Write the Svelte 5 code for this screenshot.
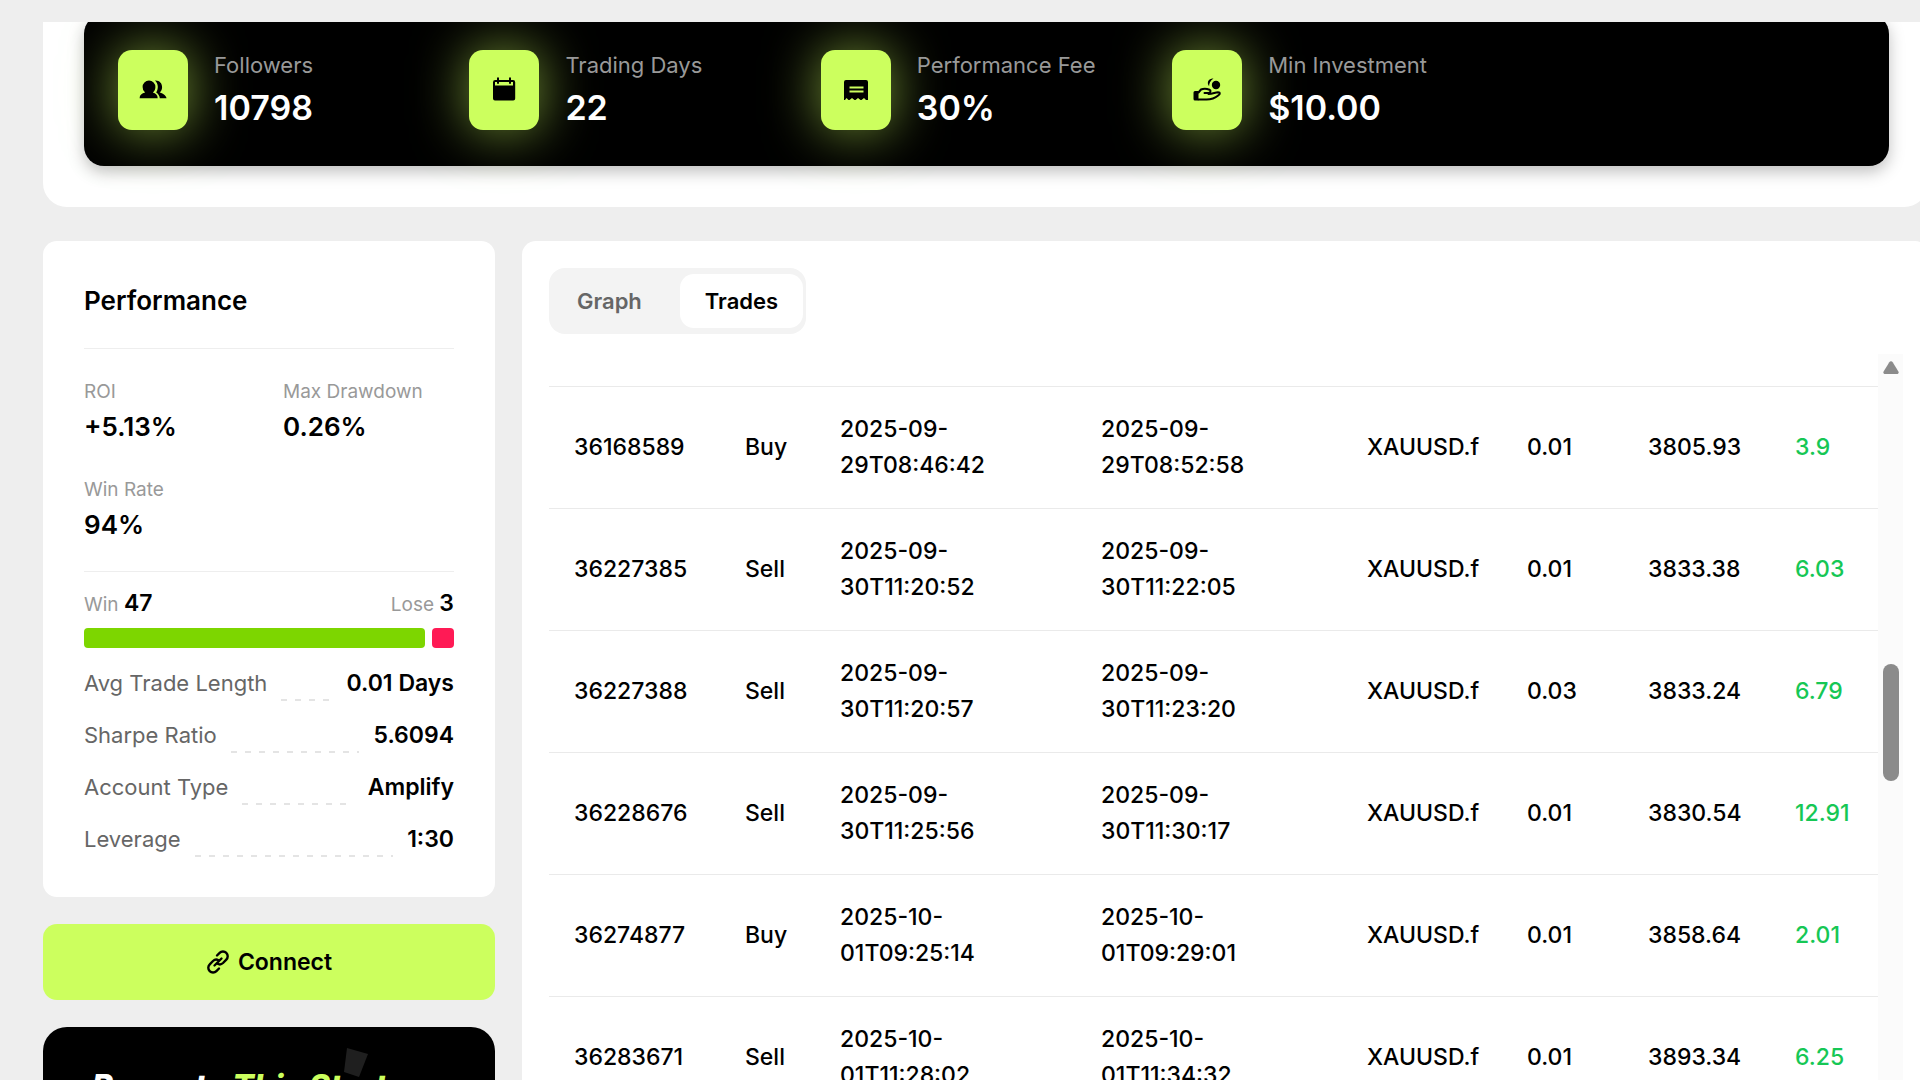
<script>
  const stats = [
    { icon: 'users', label: 'Followers', value: '10798' },
    { icon: 'calendar', label: 'Trading Days', value: '22' },
    { icon: 'receipt', label: 'Performance Fee', value: '30%' },
    { icon: 'hand', label: 'Min Investment', value: '$10.00' }
  ];
  const metrics = [
    { label: 'ROI', value: '+5.13%' },
    { label: 'Max Drawdown', value: '0.26%' },
    { label: 'Win Rate', value: '94%' }
  ];
  const details = [
    { label: 'Avg Trade Length', value: '0.01 Days' },
    { label: 'Sharpe Ratio', value: '5.6094' },
    { label: 'Account Type', value: 'Amplify' },
    { label: 'Leverage', value: '1:30' }
  ];
  const win = 47;
  const lose = 3;
  const trades = [
    ['36168589', 'Buy', '2025-09-29T08:46:42', '2025-09-29T08:52:58', 'XAUUSD.f', '0.01', '3805.93', '3.9'],
    ['36227385', 'Sell', '2025-09-30T11:20:52', '2025-09-30T11:22:05', 'XAUUSD.f', '0.01', '3833.38', '6.03'],
    ['36227388', 'Sell', '2025-09-30T11:20:57', '2025-09-30T11:23:20', 'XAUUSD.f', '0.03', '3833.24', '6.79'],
    ['36228676', 'Sell', '2025-09-30T11:25:56', '2025-09-30T11:30:17', 'XAUUSD.f', '0.01', '3830.54', '12.91'],
    ['36274877', 'Buy', '2025-10-01T09:25:14', '2025-10-01T09:29:01', 'XAUUSD.f', '0.01', '3858.64', '2.01'],
    ['36283671', 'Sell', '2025-10-01T11:28:02', '2025-10-01T11:34:32', 'XAUUSD.f', '0.01', '3893.34', '6.25']
  ];
  let tab = $state('Trades');
</script>

<div class="page">
  <section class="hero">
    <div class="panel">
      {#each stats as s}
        <div class="stat">
          <span class="tile">
            {#if s.icon === 'users'}
              <svg width="28" height="28" viewBox="0 0 28 28" aria-hidden="true">
                <path d="M10 4.500a6.400 6.400 0 0 1 6.400 6.600c0 2.400-1 4.300-2.600 5.500 2.800.7 4.900 2.700 4.900 5.600H.6c0-2.900 2.300-4.900 5.500-5.600a6.800 6.800 0 0 1-2.500-5.500A6.400 6.400 0 0 1 10 4.500z" />
                <path d="M16 4.500c4.100-.4 7.100 2.600 7.100 6.500 0 2.400-.9 4.300-2.500 5.500 2.800.7 6.500 2.700 6.900 5.700h-6.700c-.2-2.500-1.600-4.500-3.600-5.800 2.400-3.700 2.200-8.700-1.200-11.900z" />
              </svg>
            {:else if s.icon === 'calendar'}
              <svg width="28" height="28" viewBox="0 0 28 28" aria-hidden="true">
                <path fill-rule="evenodd" d="M7 1.500h2V4h10V1.500h2V4h2a2.200 2.200 0 0 1 2.200 2.200V22.500a2 2 0 0 1-2 2H5a2 2 0 0 1-2-2V6.200A2.200 2.200 0 0 1 5.200 4H7zM5 6v3.500h18V6h-2v1.800h-2V6H9v1.800H7V6z" />
              </svg>
            {:else if s.icon === 'receipt'}
              <svg width="28" height="28" viewBox="0 0 28 28" aria-hidden="true">
                <path fill-rule="evenodd" d="M4 4h20a2 2 0 0 1 2 2v18h-2l-2-2-2.500 2h-1l-2.500-2-2.500 2h-1L10 22l-2.500 2h-1L4.500 22 3 24H2V6a2 2 0 0 1 2-2zM7.500 10.500v2h14v-2zm0 4v2h14v-2z" />
              </svg>
            {:else}
              <svg width="28" height="28" viewBox="0 0 28 28" aria-hidden="true">
                <circle cx="23" cy="9" r="4.200" />
                <path d="M20.500 2.500c-4.800-.4-7.300 3.800-4.400 7.700 0-2.800 1-5.400 4.400-7.700z" />
                <path d="M.5 16.500a1.500 1.500 0 0 1 1.500-1.500h3.500v9.500H2A1.500 1.500 0 0 1 .5 23z" />
                <path d="M5.500 16.500l2.500-3c3.500-1.500 5.500-1 8.500.2 1.800.8 1 3.300-1 3.300h-4M15.500 18c4-.2 6.500-1.500 9.500-1.800 2.500 0 2 2.200.5 3-4 3.300-8 4.300-12 4.300h-8" fill="none" stroke="#000" stroke-width="2" stroke-linecap="round" stroke-linejoin="round" />
              </svg>
            {/if}
          </span>
          <div>
            <div class="stat-label">{s.label}</div>
            <div class="stat-value">{s.value}</div>
          </div>
        </div>
      {/each}
    </div>
  </section>

  <main class="body">
    <aside class="side">
      <section class="card">
        <h2>Performance</h2>
        <div class="metrics">
          {#each metrics as m}
            <div>
              <div class="m-label">{m.label}</div>
              <div class="m-value">{m.value}</div>
            </div>
          {/each}
        </div>
        <div class="record">
          <span>Win <b>{win}</b></span>
          <span>Lose <b>{lose}</b></span>
        </div>
        <div class="bar">
          <i class="won" style:flex-grow={win}></i>
          <i class="lost" style:flex-grow={lose}></i>
        </div>
        <dl>
          {#each details as d}
            <div class="detail">
              <dt>{d.label}</dt>
              <span class="leader"></span>
              <dd>{d.value}</dd>
            </div>
          {/each}
        </dl>
      </section>

      <button class="connect">
        <svg width="24" height="24" viewBox="0 0 24 24" aria-hidden="true">
          <path d="M11 5.500l2.600-2.600a4.600 4.600 0 0 1 6.700 0 4.700 4.700 0 0 1 0 6.700L17 13a4.700 4.700 0 0 1-5.500.8M13 18.500l-2.600 2.600a4.600 4.600 0 0 1-6.700 0 4.700 4.700 0 0 1 0-6.700L7 11a4.700 4.700 0 0 1 5.500-.8M8.500 15.500l7-7" fill="none" stroke="currentColor" stroke-width="2.400" stroke-linecap="round" />
        </svg>
        Connect
      </button>

      <section class="promo">
        <svg class="shard" width="26" height="32" viewBox="0 0 26 32" aria-hidden="true">
          <path d="M4 1l21 6-9 23-15-5z" fill="#1f1f1f" />
        </svg>
        <h3>Promote <em>This Strategy</em></h3>
      </section>
    </aside>

    <section class="trades">
      <div class="tabs" role="tablist">
        {#each ['Graph', 'Trades'] as t}
          <button role="tab" aria-selected={tab === t} class:active={tab === t} onclick={() => (tab = t)}>{t}</button>
        {/each}
      </div>
      <div class="scroller">
        <div class="list">
          <table>
            <colgroup>
              <col class="c-id" /><col class="c-side" /><col class="c-open" /><col class="c-close" />
              <col class="c-symbol" /><col class="c-lot" /><col class="c-price" /><col class="c-profit" />
            </colgroup>
            <tbody>
              {#each trades as row}
                <tr>
                  {#each row as cell}<td>{cell}</td>{/each}
                </tr>
              {/each}
            </tbody>
          </table>
        </div>
        <div class="track">
          <button class="up" aria-label="Scroll up">
            <svg width="16" height="13" viewBox="0 0 16 13" aria-hidden="true">
              <path d="M6.300 1.200a2 2 0 0 1 3.400 0l5.700 9.300c.7 1.300 0 2.500-1.400 2.500H2c-1.400 0-2.100-1.200-1.400-2.500z" fill="#8b8b8b" />
            </svg>
          </button>
          <span class="thumb"></span>
        </div>
      </div>
    </section>
  </main>
</div>

<style>
  :global(body) {
    background: #eee;
  }
  .page {
    box-sizing: border-box;
    height: 100vh;
    overflow: hidden;
    padding: 22px 0 0 43px;
    font-family: Inter, 'Liberation Sans', sans-serif;
    color: #000;
  }
  button {
    font: inherit;
    border: 0;
    padding: 0;
    background: none;
    cursor: pointer;
  }
  h2, h3, dl, dd {
    margin: 0;
  }
  .hero {
    overflow: hidden;
    margin-right: -8px;
    padding: 0 39px 41px 41px;
    background: #fff;
    border-radius: 0 0 24px 24px;
  }
  .panel {
    display: grid;
    grid-template-columns: repeat(5, 1fr);
    gap: 20px;
    margin-top: -8px;
    padding: 33px 34px;
    background: #000;
    border-radius: 20px;
    box-shadow: 0 6px 16px rgba(0, 0, 0, 0.25);
  }
  .stat {
    display: flex;
    align-items: center;
    gap: 26px;
    white-space: nowrap;
  }
  .tile {
    display: flex;
    align-items: center;
    justify-content: center;
    flex: none;
    width: 70px;
    height: 80px;
    border-radius: 14px;
    background: #ccff5e;
    box-shadow: 0 0 54px rgba(204, 255, 94, 0.6);
  }
  .stat-label {
    font-size: 22px;
    line-height: 36px;
    color: #999;
  }
  .stat-value {
    font-size: 34px;
    line-height: 50px;
    font-weight: 600;
    color: #fff;
  }
  .body {
    display: flex;
    align-items: flex-start;
    gap: 27px;
    margin: 34px -9px 0 0;
  }
  .side {
    flex: none;
    width: 452px;
  }
  .card {
    padding: 41px 41px 40px;
    background: #fff;
    border-radius: 14px;
  }
  h2 {
    padding-bottom: 28px;
    border-bottom: 1px solid #eee;
    font-size: 26px;
    line-height: 38px;
    font-weight: 600;
  }
  .metrics {
    display: grid;
    grid-template-columns: 1fr 1fr;
    gap: 28px;
    padding: 29px 0 25px;
    border-bottom: 1px solid #eee;
  }
  .m-label {
    font-size: 19px;
    line-height: 28px;
    color: #999;
    white-space: nowrap;
  }
  .m-value {
    font-size: 26px;
    line-height: 42px;
    font-weight: 600;
  }
  .record {
    display: flex;
    justify-content: space-between;
    padding: 13px 0 5px;
    font-size: 19px;
    line-height: 36px;
    color: #999;
  }
  .record b {
    font-size: 23px;
    font-weight: 600;
    color: #000;
  }
  .bar {
    display: flex;
    gap: 7px;
    height: 20px;
    margin-bottom: 17px;
  }
  .bar i {
    flex: 1 1 0;
    border-radius: 4px;
  }
  .won {
    background: #7dd600;
  }
  .lost {
    background: #ff1a55;
  }
  dl {
    display: grid;
    gap: 16px;
  }
  .detail {
    display: flex;
    gap: 14px;
    font-size: 22px;
    line-height: 36px;
  }
  dt {
    color: #666;
  }
  dd {
    font-size: 23px;
    font-weight: 600;
  }
  .leader {
    flex: 1;
    align-self: flex-end;
    height: 2px;
    background: repeating-linear-gradient(90deg, #e4e4e4 0 6px, transparent 6px 14px);
  }
  .connect {
    display: flex;
    align-items: center;
    justify-content: center;
    gap: 8px;
    width: 100%;
    height: 76px;
    margin: 27px 0;
    border-radius: 14px;
    background: #ccff5e;
    font-size: 23px;
    font-weight: 600;
  }
  .promo {
    position: relative;
    padding: 40px 41px;
    background: #000;
    border-radius: 24px;
  }
  .shard {
    position: absolute;
    top: 20px;
    left: 300px;
  }
  h3 {
    position: relative;
    font-size: 32px;
    line-height: 40px;
    font-weight: 800;
    font-style: italic;
    text-align: center;
    white-space: nowrap;
    color: #fff;
  }
  em {
    color: #ccff5e;
  }
  .trades {
    flex: 1;
    padding: 27px 26px 27px 27px;
    background: #fff;
    border-radius: 14px;
  }
  .tabs {
    display: inline-flex;
    gap: 13px;
    padding: 6px 3px;
    border-radius: 16px;
    background: #f3f3f3;
  }
  .tabs button {
    padding: 0 25px;
    border-radius: 14px;
    font-size: 22px;
    line-height: 54px;
    font-weight: 600;
    color: #666;
  }
  .tabs .active {
    background: #fff;
    color: #000;
  }
  .scroller {
    display: flex;
    margin-top: 20px;
  }
  .list {
    flex: 1;
    padding-top: 32px;
  }
  table {
    width: 100%;
    table-layout: fixed;
    border-collapse: collapse;
  }
  .c-id { width: 171px; }
  .c-side { width: 95px; }
  .c-open { width: 261px; }
  .c-close { width: 266px; }
  .c-symbol { width: 160px; }
  .c-lot { width: 121px; }
  .c-price { width: 147px; }
  .c-profit { width: 108px; }
  td {
    padding: 24px 25px 25px;
    border-top: 1px solid #eaeaea;
    font-size: 23px;
    line-height: 36px;
    font-weight: 500;
  }
  td:not(:nth-child(3)):not(:nth-child(4)) {
    padding-right: 0;
    white-space: nowrap;
  }
  td:last-child {
    color: #16c755;
  }
  .track {
    display: flex;
    flex-direction: column;
    align-items: center;
    width: 25px;
    padding-top: 7px;
    background: #fbfbfb;
  }
  .up {
    display: flex;
  }
  .thumb {
    width: 16px;
    height: 117px;
    margin-top: 290px;
    border-radius: 8px;
    background: #8b8b8b;
  }
</style>
